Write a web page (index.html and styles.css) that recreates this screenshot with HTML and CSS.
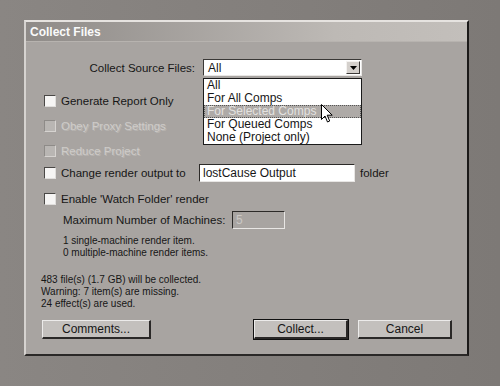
FILE: index.html
```html
<!DOCTYPE html>
<html lang="en">
<head>
<meta charset="UTF-8">
<title>Collect Files</title>
<link rel="stylesheet" href="styles.css">
</head>
<body>
<div class="dialog">
    <div class="titlebar">Collect Files</div>
    <div class="content">
        <div class="source-row">
            <span class="source-label">Collect Source Files:</span>
            <div class="select">
                <span class="select-value">All</span>
                <span class="select-arrow">
                    <svg width="7" height="4" viewBox="0 0 7 4"><path d="M0 0h7L3.5 4z" fill="#000"/></svg>
                </span>
                <ul class="select-list">
                    <li>All</li>
                    <li>For All Comps</li>
                    <li class="selected">For Selected Comps</li>
                    <li>For Queued Comps</li>
                    <li>None (Project only)</li>
                </ul>
                <svg class="cursor" width="12" height="19" viewBox="0 0 12 19">
                    <path d="M0.5 0.5v15l3.5-3.5 2.5 6 2.2-1-2.5-5.8h5z" fill="#fff" stroke="#000" stroke-width="1"/>
                </svg>
            </div>
        </div>

        <label class="check-row row-generate"><span class="box"></span>Generate Report Only</label>
        <label class="check-row row-obey disabled"><span class="box"></span>Obey Proxy Settings</label>
        <label class="check-row row-reduce disabled"><span class="box"></span>Reduce Project</label>
        <div class="check-row row-change">
            <span class="box"></span>
            <span class="change-label">Change render output to</span>
            <span class="textfield">lostCause Output</span>
            <span class="after">folder</span>
        </div>
        <label class="check-row row-enable"><span class="box"></span>Enable 'Watch Folder' render</label>

        <div class="machines-row">
            <span class="machines-label">Maximum Number of Machines:</span>
            <span class="textfield small disabled-field">5</span>
        </div>
        <div class="render-items">
            <div>1 single-machine render item.</div>
            <div>0 multiple-machine render items.</div>
        </div>

        <div class="summary">
            <div>483 file(s) (1.7 GB) will be collected.</div>
            <div>Warning: 7 item(s) are missing.</div>
            <div>24 effect(s) are used.</div>
        </div>

        <div class="buttons">
            <button class="btn btn-comments">Comments...</button>
            <button class="btn btn-default">Collect...</button>
            <button class="btn">Cancel</button>
        </div>
    </div>
</div>
</body>
</html>
```

FILE: styles.css
```css
body, html {
    margin: 0;
    padding: 0;
    height: 100%;
    overflow: hidden;
}
body {
    background: linear-gradient(90deg, #8a8683, #7d7976);
    font-family: "Liberation Sans", Arial, sans-serif;
    font-size: 11.5px;
    color: #161616;
}
.dialog {
    width: 441px;
    height: 332px;
    margin: 20px 0 0 24px;
    background-color: #a8a4a1;
    border-top: 2px solid #e6e3e0;
    border-left: 2px solid #d6d3d0;
    border-right: 2px solid #1c1a19;
    border-bottom: 2px solid #2a2827;
    box-sizing: content-box;
}
.titlebar {
    height: 20px;
    line-height: 21px;
    padding-left: 4px;
    background: linear-gradient(90deg, #8f8b88, #bdb9b5 70%, #c3bfbb);
    border-bottom: 1px solid #b7b3af;
    box-sizing: border-box;
    color: #fafafa;
    font-weight: bold;
    font-size: 12px;
}
.content {
    position: relative;
}
.source-row {
    display: flex;
    align-items: center;
    margin-top: 17px;
    height: 17px;
}
.source-label {
    width: 169px;
    text-align: right;
    margin-right: 8px;
}
.select {
    position: relative;
    width: 159px;
    height: 17px;
    box-sizing: border-box;
    background: #fff;
    border-top: 1px solid #3a3836;
    border-left: 1px solid #3a3836;
    border-right: 1px solid #e8e6e4;
    border-bottom: 1px solid #e8e6e4;
    display: flex;
    align-items: center;
}
.select-value {
    flex: 1;
    padding-left: 4px;
    font-size: 12px;
}
.select-arrow {
    width: 14px;
    height: 13px;
    margin-right: 1px;
    background: #d4d0cc;
    border-top: 1px solid #f4f2f0;
    border-left: 1px solid #f4f2f0;
    border-right: 1px solid #3a3836;
    border-bottom: 1px solid #3a3836;
    box-sizing: border-box;
    display: flex;
    align-items: center;
    justify-content: center;
}
.select-list {
    position: absolute;
    left: -1px;
    top: 18px;
    width: 159px;
    margin: 0;
    padding: 0;
    list-style: none;
    background: #fff;
    border: 1px solid #1a1a1a;
    box-sizing: border-box;
    z-index: 2;
    font-size: 12px;
}
.select-list li {
    height: 13px;
    line-height: 13px;
    padding-left: 3px;
}
.select-list li.selected {
    background: #aeaaa7;
    color: #e4e2e0;
    outline: 1px dotted #555;
    outline-offset: -1px;
}
.cursor {
    position: absolute;
    left: 117px;
    top: 44px;
    z-index: 3;
}
.check-row {
    display: flex;
    align-items: center;
    height: 18px;
    padding-left: 18px;
}
.box {
    width: 12px;
    height: 12px;
    box-sizing: border-box;
    background: #f6f5f4;
    border-top: 1px solid #4a4846;
    border-left: 1px solid #4a4846;
    border-right: 1px solid #e0dedc;
    border-bottom: 1px solid #e0dedc;
    margin-right: 5px;
    flex-shrink: 0;
}
.row-generate { margin-top: 16px; }
.row-obey { margin-top: 7px; }
.row-reduce { margin-top: 7px; }
.row-change { margin-top: 4px; }
.row-enable { margin-top: 8px; }
.disabled {
    color: #cfccc9;
    text-shadow: 1px 1px 0 #b9b6b3;
}
.disabled .box {
    background: #b9b6b3;
    border-color: #8e8b88 #d6d3d0 #d6d3d0 #8e8b88;
}
.change-label {
    width: 138px;
}
.textfield {
    display: block;
    width: 156px;
    height: 18px;
    line-height: 16px;
    box-sizing: border-box;
    padding-left: 3px;
    background: #fff;
    border-top: 1px solid #2c2a28;
    border-left: 1px solid #2c2a28;
    border-right: 1px solid #e8e6e4;
    border-bottom: 1px solid #e8e6e4;
    font-size: 12px;
}
.after {
    margin-left: 5px;
}
.machines-row {
    display: flex;
    align-items: center;
    height: 17px;
    margin-top: 3px;
    padding-left: 37px;
}
.machines-label {
    width: 169px;
    white-space: nowrap;
}
.textfield.small {
    width: 53px;
    height: 18px;
}
.disabled-field {
    background: #a8a4a1;
    color: #cbc8c5;
}
.render-items {
    margin-top: 7px;
    padding-left: 37px;
    font-size: 10px;
    line-height: 11.5px;
}
.summary {
    margin-top: 16px;
    padding-left: 15px;
    font-size: 10px;
    line-height: 12px;
}
.buttons {
    display: flex;
    margin-top: 10px;
    padding-left: 16px;
}
.btn {
    height: 19px;
    width: 94px;
    padding: 0;
    background: #c3c0bd;
    border-top: 1px solid #ecebea;
    border-left: 1px solid #ecebea;
    border-right: 2px solid #2a2827;
    border-bottom: 2px solid #2a2827;
    font-family: "Liberation Sans", Arial, sans-serif;
    font-size: 12px;
    color: #161616;
    margin-left: 10px;
}
.btn-comments {
    width: 109px;
    margin-left: 0;
    margin-right: 93px;
}
.btn-default {
    outline: 1px solid #111;
}
```
